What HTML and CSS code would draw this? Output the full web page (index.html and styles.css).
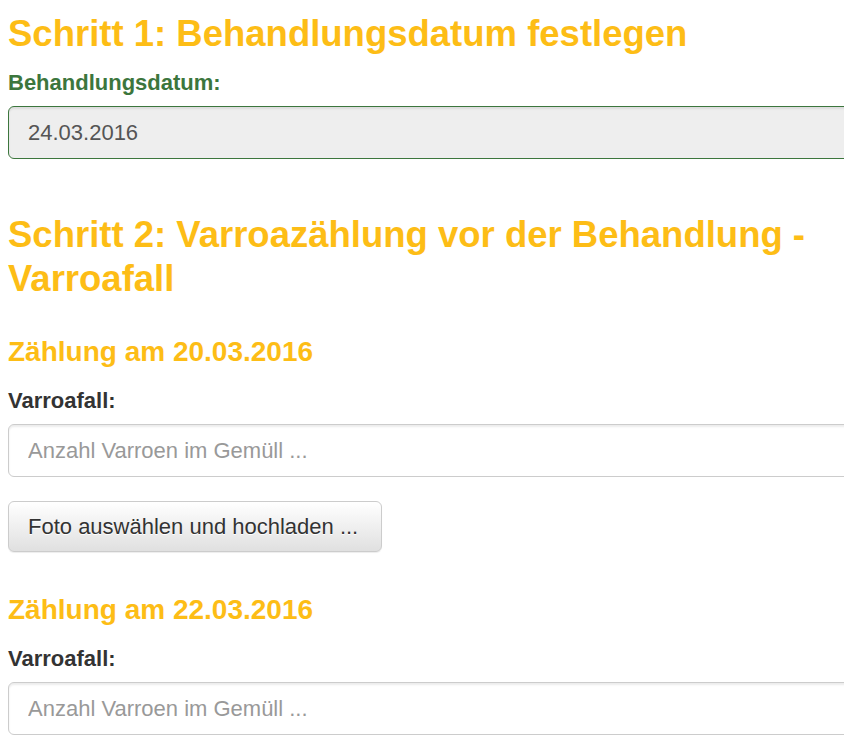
FILE: index.html
```html
<!DOCTYPE html>
<html lang="de">
<head>
  <meta charset="UTF-8">
  <meta name="viewport" content="width=device-width, initial-scale=1.0">
  <title>Varroa-Behandlung</title>
  <link rel="stylesheet" href="styles.css">
</head>
<body>
  <form class="treatment-form">
    <h3 class="step-title first">Schritt 1: Behandlungsdatum festlegen</h3>
    <div class="form-group has-success">
      <label for="treatmentDate">Behandlungsdatum:</label>
      <input type="text" id="treatmentDate" class="form-control" value="24.03.2016" readonly>
    </div>

    <h3 class="step-title">Schritt 2: Varroazählung vor der Behandlung - Varroafall</h3>

    <h4 class="count-title">Zählung am 20.03.2016</h4>
    <div class="form-group">
      <label for="count1">Varroafall:</label>
      <input type="text" id="count1" class="form-control" placeholder="Anzahl Varroen im Gemüll ...">
    </div>
    <div class="form-group upload-group">
      <button type="button" class="btn">Foto auswählen und hochladen ...</button>
    </div>

    <h4 class="count-title">Zählung am 22.03.2016</h4>
    <div class="form-group">
      <label for="count2">Varroafall:</label>
      <input type="text" id="count2" class="form-control" placeholder="Anzahl Varroen im Gemüll ...">
    </div>
  </form>
</body>
</html>
```

FILE: styles.css
```css
body {
  margin: 0;
  padding: 0 8px;
  font-family: "Liberation Sans", Arial, sans-serif;
  font-size: 22px;
  line-height: 1.42857;
  color: #333;
  background: #fff;
  overflow: hidden;
}
.treatment-form {
  width: 880px;
}
.step-title {
  font-size: 36.5px;
  font-weight: bold;
  line-height: 1.2;
  color: #fdbd16;
  margin: 53.5px 0 11px;
}
.step-title.first {
  margin-top: 12px;
}
.count-title {
  font-size: 28px;
  font-weight: bold;
  line-height: 1.1;
  color: #fdbd16;
  margin: 37px 0 16.5px;
}
.form-group {
  margin-bottom: 24px;
}
.upload-group {
  margin-bottom: 43px;
}
label {
  display: inline-block;
  font-weight: bold;
  margin-bottom: 8px;
}
.form-control {
  display: block;
  box-sizing: border-box;
  width: 100%;
  height: 53px;
  padding: 9px 19px;
  font-family: inherit;
  font-size: 22px;
  color: #555;
  background: #fff;
  border: 1px solid #ccc;
  border-radius: 6px;
  box-shadow: inset 0 2px 2px rgba(0, 0, 0, 0.075);
  outline: none;
}
.form-control::placeholder {
  color: #999;
}
.form-control[readonly] {
  background: #eee;
}
.has-success label {
  color: #3c763d;
}
.has-success .form-control {
  border-color: #3c763d;
}
.btn {
  display: inline-block;
  padding: 9px 23px 9px 19px;
  font-family: inherit;
  font-size: 22px;
  line-height: 1.42857;
  color: #333;
  background: linear-gradient(to bottom, #fff 0%, #e0e0e0 100%);
  border: 1px solid #ccc;
  border-radius: 6px;
  text-shadow: 0 1px 0 #fff;
  box-shadow: inset 0 1px 0 rgba(255, 255, 255, 0.15), 0 1px 1px rgba(0, 0, 0, 0.075);
  cursor: pointer;
}
```
